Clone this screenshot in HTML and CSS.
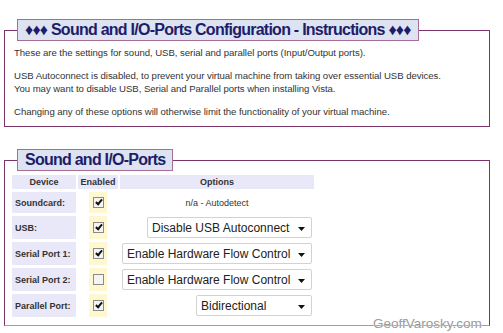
FILE: index.html
```html
<!DOCTYPE html>
<html lang="en">
<head>
    <meta charset="UTF-8">
    <title>Sound and I/O-Ports</title>
    <link rel="stylesheet" href="styles.css">
</head>
<body>

    <!-- Instructions -->
    <fieldset class="panel">
        <legend>&#9830;&#9830;&#9830; Sound and I/O-Ports Configuration - Instructions &#9830;&#9830;&#9830;</legend>
        <p>These are the settings for sound, USB, serial and parallel ports (Input/Output ports).</p>
        <p>USB Autoconnect is disabled, to prevent your virtual machine from taking over essential USB devices.<br>
        You may want to disable USB, Serial and Parallel ports when installing Vista.</p>
        <p>Changing any of these options will otherwise limit the functionality of your virtual machine.</p>
    </fieldset>

    <!-- Port settings -->
    <fieldset class="panel ports">
        <legend>Sound and I/O-Ports</legend>
        <table class="port-table">
            <tr>
                <th class="col-device">Device</th>
                <th class="col-enabled">Enabled</th>
                <th class="col-options">Options</th>
            </tr>
            <tr class="short">
                <td class="device">Soundcard:</td>
                <td class="enabled"><span class="check on"></span></td>
                <td class="options center">n/a - Autodetect</td>
            </tr>
            <tr>
                <td class="device">USB:</td>
                <td class="enabled"><span class="check on"></span></td>
                <td class="options">
                    <span class="select-wrap">
                        <select class="select sel-usb">
                            <option>Disable USB Autoconnect</option>
                            <option>Enable USB Autoconnect</option>
                        </select>
                        <svg class="arrow" width="7" height="4" viewBox="0 0 7 4"><path d="M0 0h7L3.5 4z"/></svg>
                    </span>
                </td>
            </tr>
            <tr>
                <td class="device">Serial Port 1:</td>
                <td class="enabled"><span class="check on"></span></td>
                <td class="options">
                    <span class="select-wrap">
                        <select class="select sel-serial">
                            <option>Enable Hardware Flow Control</option>
                            <option>Disable Hardware Flow Control</option>
                        </select>
                        <svg class="arrow" width="7" height="4" viewBox="0 0 7 4"><path d="M0 0h7L3.5 4z"/></svg>
                    </span>
                </td>
            </tr>
            <tr>
                <td class="device">Serial Port 2:</td>
                <td class="enabled"><span class="check"></span></td>
                <td class="options">
                    <span class="select-wrap">
                        <select class="select sel-serial">
                            <option>Enable Hardware Flow Control</option>
                            <option>Disable Hardware Flow Control</option>
                        </select>
                        <svg class="arrow" width="7" height="4" viewBox="0 0 7 4"><path d="M0 0h7L3.5 4z"/></svg>
                    </span>
                </td>
            </tr>
            <tr>
                <td class="device">Parallel Port:</td>
                <td class="enabled"><span class="check on"></span></td>
                <td class="options">
                    <span class="select-wrap">
                        <select class="select sel-parallel">
                            <option>Bidirectional</option>
                            <option>Output only</option>
                        </select>
                        <svg class="arrow" width="7" height="4" viewBox="0 0 7 4"><path d="M0 0h7L3.5 4z"/></svg>
                    </span>
                </td>
            </tr>
        </table>
    </fieldset>

    <div class="watermark">GeoffVarosky.com</div>

</body>
</html>
```

FILE: styles.css
```css
body {
    font-family: "Liberation Sans", Arial, sans-serif;
    margin: 0;
    width: 503px;
    height: 333px;
    position: relative;
    overflow: hidden;
    background: #fff;
    color: #333;
}
.panel {
    width: 486px;
    box-sizing: border-box;
    margin: 19px 0 0 4px;
    padding: 0 9px 8px;
    border: 1px solid #7a3469;
}
.panel legend {
    margin-left: 3px;
    padding: 0 7px;
    height: 22px;
    box-sizing: border-box;
    line-height: 20px;
    font-size: 16px;
    font-weight: bold;
    letter-spacing: -0.75px;
    color: #1d1d6b;
    background: #dee3f1;
    border: 1px solid #a86c98;
}
.panel p {
    margin: 10px 0 0;
    font-size: 9.6px;
    line-height: 13px;
    letter-spacing: -0.05px;
}
.panel p:first-of-type {
    margin-top: 5px;
}
/* second box */
.ports {
    margin-top: 22px;
    padding: 0 5px 5px;
    border-bottom-color: #c38bb3;
}
.ports legend {
    margin-left: 7px;
}
.port-table {
    margin-top: 1px;
    border-spacing: 2px 3px;
    font-size: 9px;
}
.port-table th {
    background: #e8e8f8;
    height: 14px;
    padding: 0;
    font-weight: bold;
    color: #333;
}
.col-device { width: 64px; }
.col-enabled { width: 40px; }
.col-options { width: 194px; }
.port-table td {
    padding: 0;
    height: 23px;
}
.port-table tr.short td {
    height: 21px;
}
.port-table td.device {
    background: #e8e8f8;
    font-weight: bold;
    padding-left: 3px;
    color: #333;
}
.port-table td.enabled {
    padding: 0 11px;
    background: #fff7cf;
    background-clip: content-box;
    text-align: center;
}
.port-table td.options {
    text-align: right;
    padding-right: 2px;
}
.port-table td.center {
    text-align: center;
    padding-right: 0;
    color: #333;
}
.check {
    display: inline-block;
    width: 11px;
    height: 11px;
    box-sizing: border-box;
    border: 1px solid #8a8a8a;
    background: #f4f4f4;
    vertical-align: middle;
    position: relative;
}
.check.on::after {
    content: "";
    position: absolute;
    left: 3px;
    top: 0;
    width: 2px;
    height: 5px;
    border: solid #111;
    border-width: 0 2px 2px 0;
    transform: rotate(40deg);
}
.select-wrap {
    display: inline-block;
    position: relative;
    vertical-align: middle;
}
.select {
    appearance: none;
    -webkit-appearance: none;
    display: block;
    height: 21px;
    box-sizing: border-box;
    padding: 0 14px 0 4px;
    border: 1px solid #d2d2d2;
    border-radius: 2px;
    background: #fff;
    font-family: "Liberation Sans", Arial, sans-serif;
    font-size: 12px;
    color: #222;
}
.sel-usb { width: 165px; }
.sel-serial { width: 190px; }
.sel-parallel { width: 116px; }
.arrow {
    position: absolute;
    right: 7px;
    top: 10px;
    fill: #111;
}
.watermark {
    position: absolute;
    left: 373px;
    top: 316px;
    font-size: 13.5px;
    color: #9a9a9a;
    text-shadow: 0 0 1px #fff, 0 0 1px #fff;
}
```
